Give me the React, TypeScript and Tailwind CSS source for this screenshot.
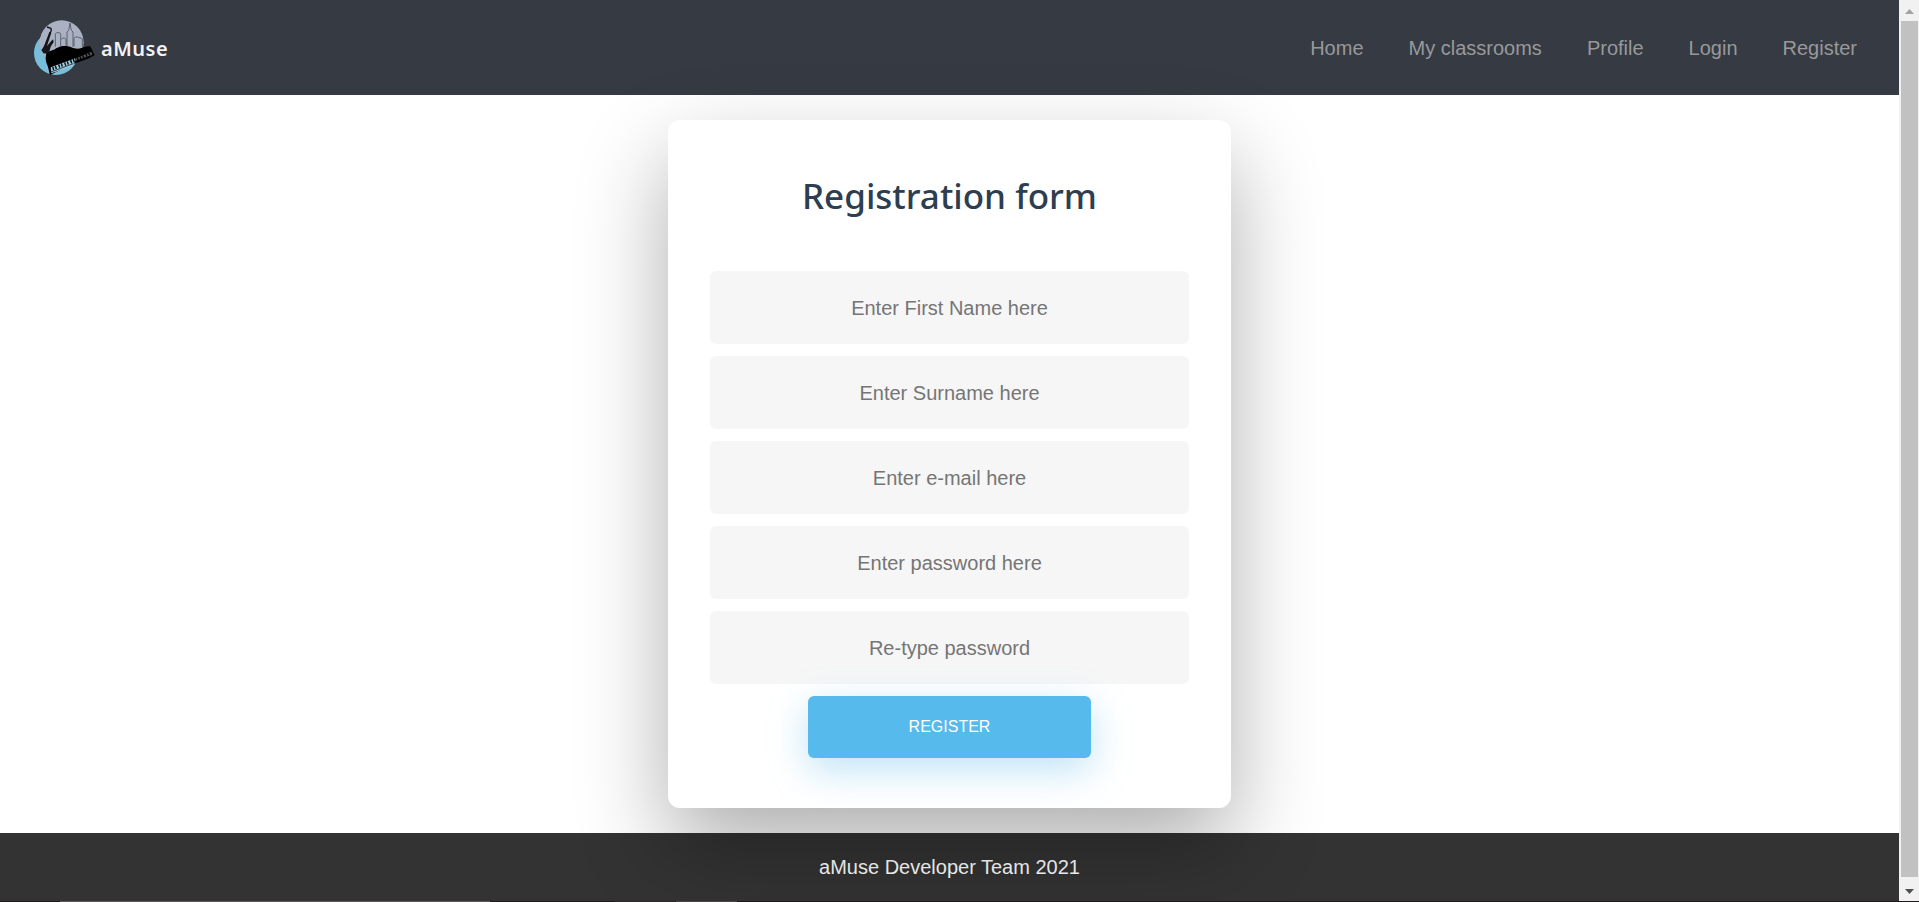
import React from "react";

const links = ["Home", "My classrooms", "Profile", "Login", "Register"];

const fields = [
  { id: "first-name", type: "text", label: "Enter First Name here" },
  { id: "surname", type: "text", label: "Enter Surname here" },
  { id: "email", type: "email", label: "Enter e-mail here" },
  { id: "password", type: "password", label: "Enter password here" },
  { id: "password-repeat", type: "password", label: "Re-type password" },
];

function Logo() {
  return (
    <svg width="62" height="58" viewBox="21 15 186 174" aria-hidden="true">
      <circle cx="90" cy="117" r="66" fill="#78bedb" />
      <circle cx="107" cy="85" r="66" fill="#a9b1c3" />
      {/* skyline */}
      <path
        d="M88 98V60l4-4h9l3 5v36M106 76l5-4h5l4 5v20M123 96V54l5-5 4-22 4 22 5 5v44M144 98V73l4-4h7l14 5v26"
        fill="none"
        stroke="#4d535f"
        strokeWidth="2.500"
      />
      {/* saxophone */}
      <path d="M63 39l12 4 1 6-22 52" fill="none" stroke="#14161a" strokeWidth="4" strokeLinejoin="round" />
      <path d="M70 54l6 2-13 40 12-14 6-6 2 8-9 14-6 22-16-2-6-10 9-12z" fill="#14161a" />
      {/* grand piano */}
      <path
        d="M60 122c4-10 14-12 24-15 10-6 18-12 36-11 16 1 20 8 35 8 12 0 22-8 36-8 6 6 10 18 15 28l-20 10-55 20-59 29c-3-10-4-17-7-27-4-10-8-20-5-34z"
        fill="#000"
      />
      <path d="M74 160l74-27-2 12-6 11-64 22z" fill="#9fc9dd" />
      <path d="M150 133l46-20 3 9-53 20z" fill="#4e545e" />
      <path
        d="M80 158l3 10M88 155l3 10M98 151l3 10M106 148l3 10M116 145l3 10M124 142l3 10M134 138l3 10M142 135l3 10M154 131l3 8M162 128l3 8M170 124l3 8M180 120l3 8M188 116l3 8"
        stroke="#000"
        strokeWidth="4"
      />
      <path d="M74 174l68-25" stroke="#000" strokeWidth="2" />
    </svg>
  );
}

function Header() {
  return (
    <header className="flex h-[95px] items-center justify-between bg-[#363a42] pr-[42px] pl-[33px]">
      <a
        href="#home"
        className="flex items-center gap-1.5 font-['Noto_Sans',sans-serif] text-xl font-semibold tracking-wide text-[#f2f2f2]"
      >
        <Logo />
        <span className="pt-0.5">aMuse</span>
      </a>
      <nav className="flex gap-[45px] text-xl text-[#97999b]">
        {links.map((link) => (
          <a key={link} href={"#" + link.toLowerCase().replace(" ", "-")}>
            {link}
          </a>
        ))}
      </nav>
    </header>
  );
}

function RegistrationForm() {
  return (
    <form
      onSubmit={(event) => event.preventDefault()}
      className="relative flex w-full max-w-[563px] flex-col items-center rounded-xl bg-white px-[42px] pt-12 pb-[50px] shadow-[0_38px_90px_0_rgba(0,0,0,0.32)]"
    >
      <h1 className="mb-12 font-['Noto_Sans',sans-serif] text-[35px] leading-[55px] font-medium text-[#2c3e50]">
        Registration form
      </h1>
      <div className="flex w-full flex-col gap-3">
        {fields.map((field) => (
          <input
            key={field.id}
            id={field.id}
            type={field.type}
            placeholder={field.label}
            aria-label={field.label}
            className="h-[73px] w-full rounded-md bg-[#f6f6f6] pt-0.5 text-center text-xl placeholder:text-[#757575]"
          />
        ))}
      </div>
      <button
        type="submit"
        className="relative mt-3 h-[62px] w-[283px] rounded-md bg-[#56baed] text-base text-white uppercase shadow-[0_12px_38px_0_rgba(95,186,233,0.4)]"
      >
        Register
      </button>
    </form>
  );
}

function ScrollBar() {
  return (
    <div aria-hidden="true" className="flex w-5 shrink-0 flex-col items-center bg-[#f1f1f1]">
      <svg className="h-[21px] w-5" viewBox="0 0 20 21">
        <path d="M6 14l4.500-5 4.500 5z" fill="#a3a3a3" />
      </svg>
      <div className="w-[17px] grow bg-[#c1c1c1]" />
      <svg className="h-6 w-5" viewBox="0 0 20 24">
        <path d="M6 12l4.500 5 4.500-5z" fill="#505050" />
      </svg>
    </div>
  );
}

export default function App() {
  return (
    <div className="flex min-h-screen flex-col font-['Liberation_Sans',Arial,sans-serif]">
      <div className="flex grow">
        <div className="flex min-w-0 grow flex-col bg-white">
          <Header />
          <main className="flex grow items-start justify-center py-[25px]">
            <RegistrationForm />
          </main>
          <footer className="flex h-[68px] items-center justify-center bg-[#333333] text-xl text-white">
            aMuse Developer Team 2021
          </footer>
        </div>
        <ScrollBar />
      </div>
      <div className="flex h-px bg-[#1d1a1b]">
        <div className="ml-[60px] w-[430px] bg-[#5c595a]" />
        <div className="ml-[124px] w-[61px] bg-[#2d2a2b]" />
        <div className="ml-px w-[61px] bg-[#4a4748]" />
      </div>
    </div>
  );
}
